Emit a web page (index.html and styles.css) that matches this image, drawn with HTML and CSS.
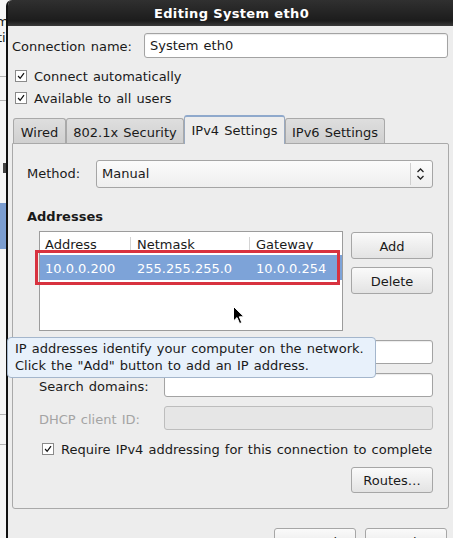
FILE: index.html
```html
<!DOCTYPE html>
<html lang="en">
<head>
<meta charset="UTF-8">
<meta name="viewport" content="width=device-width, initial-scale=1.0">
<title>Editing System eth0</title>
<link rel="stylesheet" href="styles.css">
</head>
<body>
<div class="screen">
  <div class="behind">
    <div class="behind-text top">m</div>
    <div class="behind-text">ti</div>
    <div class="behind-line gap1"></div>
    <div class="behind-line gap2"></div>
    <div class="behind-dark"></div>
    <div class="behind-sel"></div>
    <div class="behind-line gap3"></div>
    <div class="behind-line gap4"></div>
  </div>

  <div class="dialog">
    <div class="titlebar">Editing System eth0</div>
    <div class="content">
      <div class="name-row">
        <span class="name-label">Connection name:</span>
        <div class="entry">System eth0</div>
      </div>

      <div class="check-row first">
        <span class="checkbox"><svg width="12" height="12" viewBox="0 0 12 12"><path d="M2.5 6 L5 8.8 L9.6 2.6" fill="none" stroke="#111" stroke-width="1.5"/></svg></span>
        <span class="check-text">Connect automatically</span>
      </div>
      <div class="check-row">
        <span class="checkbox"><svg width="12" height="12" viewBox="0 0 12 12"><path d="M2.5 6 L5 8.8 L9.6 2.6" fill="none" stroke="#111" stroke-width="1.5"/></svg></span>
        <span class="check-text">Available to all users</span>
      </div>

      <div class="tabs">
        <div class="tab wired">Wired</div>
        <div class="tab security">802.1x Security</div>
        <div class="tab ipv4 active">IPv4 Settings</div>
        <div class="tab ipv6">IPv6 Settings</div>
      </div>

      <div class="panel">
        <div class="method-row">
          <span class="method-label">Method:</span>
          <div class="combo">
            <span class="combo-text">Manual</span>
            <span class="combo-sep"></span>
            <svg class="combo-arrows" width="9" height="14" viewBox="0 0 9 14"><path d="M1.5 5 L4.5 2 L7.5 5 M1.5 9 L4.5 12 L7.5 9" fill="none" stroke="#222" stroke-width="1.3"/></svg>
          </div>
        </div>

        <div class="section-title">Addresses</div>

        <div class="addr-block">
          <div class="addr-list">
            <div class="list-head">
              <span class="col c1">Address</span>
              <span class="col c2">Netmask</span>
              <span class="col c3">Gateway</span>
            </div>
            <div class="list-row selected">
              <span class="col c1">10.0.0.200</span>
              <span class="col c2">255.255.255.0</span>
              <span class="col c3">10.0.0.254</span>
            </div>
            <div class="highlight"></div>
          </div>
          <div class="addr-buttons">
            <div class="button">Add</div>
            <div class="button">Delete</div>
          </div>
        </div>

        <div class="field-row">
          <span class="field-label">DNS servers:</span>
          <div class="entry"></div>
        </div>
        <div class="field-row">
          <span class="field-label">Search domains:</span>
          <div class="entry"></div>
        </div>
        <div class="field-row">
          <span class="field-label disabled">DHCP client ID:</span>
          <div class="entry disabled"></div>
        </div>

        <div class="check-row require">
          <span class="checkbox"><svg width="12" height="12" viewBox="0 0 12 12"><path d="M2.5 6 L5 8.8 L9.6 2.6" fill="none" stroke="#111" stroke-width="1.5"/></svg></span>
          <span class="check-text">Require IPv4 addressing for this connection to complete</span>
        </div>

        <div class="routes-row">
          <div class="button routes">Routes…</div>
        </div>
      </div>

      <div class="actions">
        <div class="button action">Cancel</div>
        <div class="button action">Apply</div>
      </div>
    </div>
  </div>

  <div class="tooltip">IP addresses identify your computer on the network.<br>Click the "Add" button to add an IP address.</div>

  <svg class="pointer" width="12" height="19" viewBox="0 0 12 19"><path d="M0.5 0.5 L0.5 15 L4 11.6 L6.6 17.6 L8.8 16.6 L6.3 10.8 L11 10.8 Z" fill="#000" stroke="#fff" stroke-width="1"/></svg>
</div>
</body>
</html>
```

FILE: styles.css
```css
* {
  box-sizing: border-box;
}

body {
  margin: 0;
  font-family: "DejaVu Sans", sans-serif;
  font-size: 13px;
  word-spacing: 1px;
  color: #1a1a1a;
  background: #f2f2f2;
  overflow: hidden;
}

.screen {
  position: relative;
  display: flex;
  width: 453px;
  height: 538px;
  overflow: hidden;
}

/* window behind the dialog */
.behind {
  flex: 0 0 6px;
  background: #f6f6f6;
  overflow: hidden;
  padding-top: 14px;
}
.behind-text {
  height: 16px;
  line-height: 16px;
  margin-left: -3px;
  white-space: nowrap;
}
.behind-text.top {
  margin-left: -4px;
}
.behind-line {
  height: 1px;
  background: #b4b4b4;
}
.behind-line.gap1 { margin-top: 30px; }
.behind-line.gap2 { margin-top: 23px; }
.behind-dark {
  width: 3px;
  height: 10px;
  margin: 62px 0 0 3px;
  background: #444;
}
.behind-sel {
  height: 46px;
  margin-top: 30px;
  background: #7b9dd0;
}
.behind-line.gap3 { margin-top: 165px; }
.behind-line.gap4 { margin-top: 29px; }

/* dialog */
.dialog {
  flex: 0 0 449px;
  display: flex;
  flex-direction: column;
  background: #ededed;
  border-left: 2px solid #111;
  border-top-left-radius: 6px;
  overflow: hidden;
}

.titlebar {
  height: 26px;
  line-height: 27px;
  text-align: center;
  font-weight: bold;
  color: #fff;
  background: linear-gradient(#303030, #1c1c1c 80%, #3a3a3a);
  letter-spacing: 0.35px;
  word-spacing: 0;
}

.content {
  padding: 7px 6px 0 4px;
  display: flex;
  flex-direction: column;
}

.name-row {
  display: flex;
  align-items: center;
  height: 25px;
  margin-right: 1px;
}
.name-label {
  width: 132px;
  padding-top: 1px;
}
.name-row .entry {
  flex: 1;
  height: 25px;
  padding-left: 5px;
  line-height: 24px;
}

.entry {
  background: #fff;
  border: 1px solid #a3a3a3;
  border-radius: 3px;
  box-shadow: inset 0 1px 1px rgba(0, 0, 0, 0.08);
}
.entry.disabled {
  background: #e6e6e6;
  border-color: #bdbdbd;
  box-shadow: none;
}

.check-row {
  display: flex;
  align-items: center;
  height: 18px;
  margin-top: 4px;
  padding-left: 3px;
}
.check-row.first {
  margin-top: 8px;
}
.check-text {
  padding-top: 2px;
}
.checkbox {
  width: 12px;
  height: 12px;
  margin-right: 7px;
  margin-top: 1px;
  background: #fff;
  border: 1px solid #8a8a8a;
  display: flex;
  align-items: center;
  justify-content: center;
}
.checkbox svg {
  display: block;
}

/* notebook */
.tabs {
  display: flex;
  align-items: flex-end;
  height: 28px;
  margin-top: 9px;
  padding-left: 1px;
  position: relative;
  z-index: 1;
}
.tab {
  height: 25px;
  line-height: 28px;
  text-align: center;
  background: linear-gradient(#dedede, #d0d0d0);
  border: 1px solid #a9a9a9;
  border-bottom: none;
  border-radius: 3px 3px 0 0;
}
.tab.wired { width: 53px; }
.tab.security { width: 118px; }
.tab.ipv4 { width: 101px; }
.tab.ipv6 { width: 100px; }
.tab.active {
  height: 29px;
  margin-bottom: -1px;
  line-height: 28px;
  background: #ededed;
  border-color: #9aaac0;
  border-top: 2px solid #8fa9cc;
}

.panel {
  border: 1px solid #a9a9a9;
  border-radius: 0 2px 3px 3px;
  padding: 16px 15px 15px 14px;
  display: flex;
  flex-direction: column;
}

.method-row {
  display: flex;
  align-items: center;
  height: 28px;
  line-height: 30px;
}
.method-label {
  width: 69px;
}
.combo {
  flex: 1;
  height: 28px;
  display: flex;
  align-items: center;
  background: linear-gradient(#fbfbfb, #eeeeee);
  border: 1px solid #a5a5a5;
  border-radius: 3px;
}
.combo-text {
  flex: 1;
  padding-left: 5px;
}
.combo-sep {
  width: 1px;
  height: 22px;
  background: #cfcfcf;
  margin-right: 5px;
}
.combo-arrows {
  margin-right: 7px;
}

.section-title {
  font-weight: bold;
  height: 16px;
  line-height: 19px;
  margin-top: 19px;
}

.addr-block {
  display: flex;
  gap: 8px;
  margin-top: 8px;
  padding-left: 12px;
}
.addr-list {
  position: relative;
  width: 304px;
  height: 100px;
  background: #fff;
  border: 1px solid #9c9c9c;
}
.list-head,
.list-row {
  display: flex;
}
.list-head {
  height: 22px;
  line-height: 19px;
  padding-top: 3px;
}
.list-row {
  height: 25px;
  line-height: 27px;
  margin-top: 1px;
}
.col {
  white-space: nowrap;
}
.c1 {
  width: 90px;
  padding-left: 5px;
}
.c2 {
  width: 119px;
  padding-left: 7px;
}
.c3 {
  flex: 1;
  padding-left: 7px;
}
.list-head .c2,
.list-head .c3 {
  background: linear-gradient(#d4d4d4, #d4d4d4) no-repeat left 2px / 1px 14px;
}
.list-row.selected {
  background: #7da3d8;
  color: #fff;
}
.highlight {
  position: absolute;
  left: -5px;
  top: 18px;
  width: 305px;
  height: 35px;
  border: 3px solid #d8323f;
}

.addr-buttons {
  display: flex;
  flex-direction: column;
  gap: 8px;
  margin-top: 1px;
}

.button {
  height: 27px;
  line-height: 27px;
  text-align: center;
  background: linear-gradient(#fafafa, #e3e3e3);
  border: 1px solid #a6a6a6;
  border-radius: 3px;
}
.addr-buttons .button {
  width: 82px;
}

.field-row {
  display: flex;
  align-items: center;
  height: 24px;
  margin-top: 9px;
  padding-left: 12px;
}
.field-label {
  width: 125px;
  padding-top: 2px;
}
.field-label.disabled {
  color: #a4a4a4;
}
.field-row .entry {
  flex: 1;
  height: 24px;
}

.check-row.require {
  margin-top: 9px;
  padding-left: 15px;
}

.routes-row {
  display: flex;
  justify-content: flex-end;
  margin-top: 10px;
}
.button.routes {
  width: 82px;
  height: 26px;
  line-height: 26px;
}

.actions {
  display: flex;
  justify-content: flex-end;
  gap: 9px;
  margin-top: 19px;
  margin-right: 2px;
}
.button.action {
  width: 82px;
}

/* overlays */
.tooltip {
  position: absolute;
  left: 7px;
  top: 337px;
  width: 369px;
  height: 41px;
  padding: 2px 0 0 7px;
  line-height: 17px;
  background: #e8f1fb;
  border: 1px solid #a4b6cc;
  border-radius: 4px;
  white-space: nowrap;
}

.pointer {
  position: absolute;
  left: 233px;
  top: 306px;
}
```
